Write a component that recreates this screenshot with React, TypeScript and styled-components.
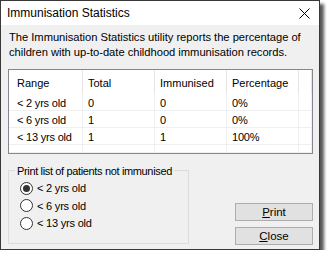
import React from "react"
import styled, { createGlobalStyle } from "styled-components"

const GlobalStyle = createGlobalStyle`
  html, body {
    margin: 0;
    padding: 0;
    background: #ffffff;
  }
  body {
    font-family: "Liberation Sans", Arial, sans-serif;
    color: #000;
  }
`

const Window = styled.div`
  width: 320px;
  height: 250px;
  box-sizing: border-box;
  border: 1px solid #3a3a3a;
  background: #f0f0f0;
  display: flex;
  flex-direction: column;
  box-shadow: 4px 4px 3px rgba(0, 0, 0, 0.65);
  white-space: nowrap;
`

const TitleBar = styled.div`
  height: 24px;
  flex: 0 0 auto;
  background: #ffffff;
  display: flex;
  align-items: center;
  justify-content: space-between;
  padding: 0 9px 0 6px;
  font-size: 12px;
`

const Body = styled.div`
  flex: 1 1 auto;
  display: flex;
  flex-direction: column;
  padding: 5px 6px 5px 7px;
  font-size: 11px;
  min-height: 0;
`

const Intro = styled.p`
  margin: 0 0 0 1px;
  line-height: 15px;
  font-size: 11.2px;
  letter-spacing: -0.03px;
`

const ListBox = styled.div`
  margin-top: 9px;
  height: 85px;
  flex: 0 0 auto;
  box-sizing: border-box;
  border: 1px solid #828790;
  background: #ffffff;
  display: grid;
  grid-template-columns: 74px 72px 72px 72px 1fr;
  grid-template-rows: 24px repeat(3, 17px) 1fr;
  overflow: hidden;
`

const HeadCell = styled.div<{ $first?: boolean }>`
  display: flex;
  align-items: center;
  padding: 2px 0 0 ${(p) => (p.$first ? "8px" : "5px")};
  border-right: 1px solid #e5e5e5;
  font-size: 11px;
`

const Cell = styled.div<{ $first?: boolean }>`
  display: flex;
  align-items: center;
  padding: 1px 0 0 ${(p) => (p.$first ? "8px" : "5px")};
  border-right: 1px solid #f0f0f0;
  border-bottom: 1px solid #f0f0f0;
  font-size: 11px;
  letter-spacing: -0.2px;
`

const Bottom = styled.div`
  display: flex;
  justify-content: space-between;
  align-items: flex-end;
  flex: 1 1 auto;
  min-height: 0;
`

const Group = styled.fieldset`
  margin: 0;
  width: 181px;
  box-sizing: border-box;
  border: 1px solid #dcdcdc;
  padding: 2px 0 11px 0;
  display: flex;
  flex-direction: column;
`

const Legend = styled.legend`
  margin-left: 6px;
  padding: 0 2px;
  font-size: 11px;
  letter-spacing: -0.35px;
  line-height: 14px;
`

const RadioRow = styled.label`
  display: flex;
  align-items: center;
  height: 17.5px;
  margin-left: 11px;
  gap: 4px;
  font-size: 11px;
  letter-spacing: -0.2px;
`

const RadioDot = styled.span<{ $checked?: boolean }>`
  width: 13px;
  height: 13px;
  box-sizing: border-box;
  border-radius: 50%;
  border: 1px solid #333333;
  background: #ffffff;
  display: flex;
  align-items: center;
  justify-content: center;

  &::after {
    content: "";
    width: 7px;
    height: 7px;
    border-radius: 50%;
    background: ${(p) => (p.$checked ? "#333333" : "transparent")};
  }
`

const Buttons = styled.div`
  display: flex;
  flex-direction: column;
  gap: 6px;
  margin-bottom: -1px;
`

const Button = styled.button`
  width: 78px;
  height: 18px;
  box-sizing: border-box;
  border: 1px solid #adadad;
  background: #e1e1e1;
  font-family: "Liberation Sans", Arial, sans-serif;
  font-size: 11.5px;
  color: #000;
  padding: 0;
  display: flex;
  align-items: center;
  justify-content: center;

  u {
    text-decoration: underline;
  }
`

const rows = [
  ["< 2 yrs old", "0", "0", "0%"],
  ["< 6 yrs old", "1", "0", "0%"],
  ["< 13 yrs old", "1", "1", "100%"],
]

const ranges = ["< 2 yrs old", "< 6 yrs old", "< 13 yrs old"]

export default function App() {
  return (
    <>
      <GlobalStyle />
      <Window>
        <TitleBar>
          <span>Immunisation Statistics</span>
          <svg width="11" height="11" viewBox="0 0 11 11">
            <path d="M0.5 0.5 L10.5 10.5 M10.5 0.5 L0.5 10.5" stroke="#000" strokeWidth="1" />
          </svg>
        </TitleBar>
        <Body>
          <Intro>
            The Immunisation Statistics utility reports the percentage of
            <br />
            children with up-to-date childhood immunisation records.
          </Intro>
          <ListBox>
            <HeadCell $first>Range</HeadCell>
            <HeadCell>Total</HeadCell>
            <HeadCell>Immunised</HeadCell>
            <HeadCell>Percentage</HeadCell>
            <HeadCell />
            {rows.map((r) => (
              <React.Fragment key={r[0]}>
                <Cell $first>{r[0]}</Cell>
                <Cell>{r[1]}</Cell>
                <Cell>{r[2]}</Cell>
                <Cell>{r[3]}</Cell>
                <Cell />
              </React.Fragment>
            ))}
            <Cell $first />
            <Cell />
            <Cell />
            <Cell />
            <Cell />
          </ListBox>
          <Bottom>
            <Group>
              <Legend>Print list of patients not immunised</Legend>
              {ranges.map((r, i) => (
                <RadioRow key={r}>
                  <RadioDot $checked={i === 0} />
                  {r}
                </RadioRow>
              ))}
            </Group>
            <Buttons>
              <Button>
                <u>P</u>rint
              </Button>
              <Button>
                <u>C</u>lose
              </Button>
            </Buttons>
          </Bottom>
        </Body>
      </Window>
    </>
  )
}
